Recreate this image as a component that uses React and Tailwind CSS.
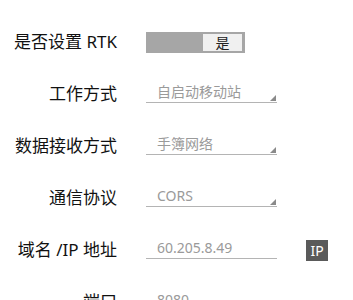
import { useState } from "react";

const FONT = { fontFamily: '"Noto Sans", "Noto Sans CJK SC", sans-serif' };

const ROWS = [
  { label: "工作方式", value: "自启动移动站", select: true },
  { label: "数据接收方式", value: "手簿网络", select: true },
  { label: "通信协议", value: "CORS", select: true },
  { label: "域名 /IP 地址", value: "60.205.8.49", ip: true },
  { label: "端口", value: "8080" },
];

function Field({ value, select }) {
  return (
    <div className="relative w-[131px] h-[21px] mb-[3px] border-b border-[#b4b4b4] pl-[11px] text-[14px] leading-[20px] text-[#9a9a9a]">
      {value}
      {select && (
        <svg className="absolute right-[1px] bottom-[1px]" width="6" height="6" viewBox="0 0 6 6">
          <polygon points="6,0 6,6 0,6" fill="#8a8a8a" />
        </svg>
      )}
    </div>
  );
}

export default function App() {
  const [rtk, setRtk] = useState(true);

  return (
    <div className="w-[353px] h-[300px] overflow-hidden bg-white pt-[16px]" style={FONT}>
      {/* RTK 开关 */}
      <div className="flex items-center h-[52px]">
        <div className="w-[117px] text-right text-[17px] text-[#111]">是否设置 RTK</div>
        <div
          onClick={() => setRtk(!rtk)}
          className="ml-[29px] w-[99px] h-[21px] bg-[#a6a6a6] flex justify-end pt-[2px] pb-[2px] pr-[3px] cursor-pointer"
        >
          <div className="w-[39px] h-full bg-[#f0f0f0] flex items-center justify-center text-[14px] text-[#222]">
            {rtk ? "是" : "否"}
          </div>
        </div>
      </div>

      {ROWS.map((row) => (
        <div key={row.label} className="flex items-center h-[52px]">
          <div className="w-[117px] text-right text-[17px] text-[#111] whitespace-nowrap">{row.label}</div>
          <div className="ml-[29px]">
            <Field value={row.value} select={row.select} />
          </div>
          {row.ip && (
            <div className="ml-[29px] w-[22px] h-[21px] bg-[#5a5a5a] text-white text-[14px] flex items-center justify-center">
              IP
            </div>
          )}
        </div>
      ))}
    </div>
  );
}
